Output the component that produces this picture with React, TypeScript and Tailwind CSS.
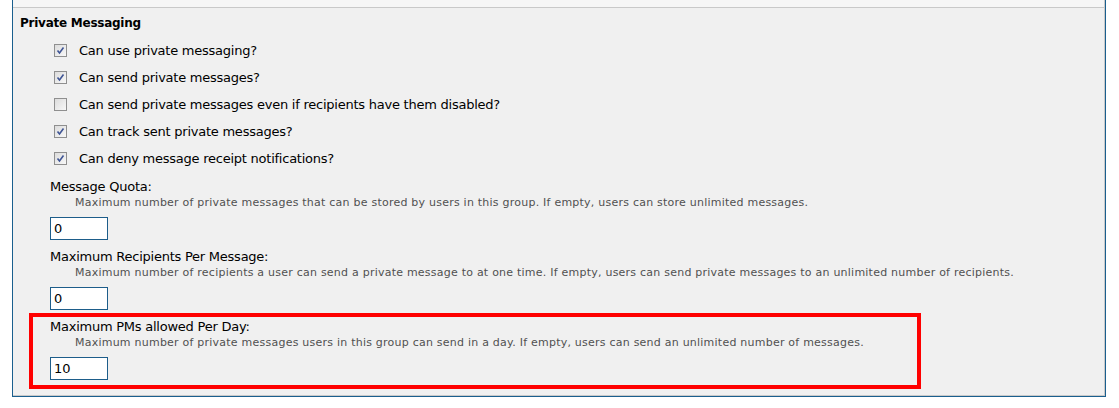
import React from "react";

const font = { fontFamily: '"DejaVu Sans", Verdana, sans-serif' };

function Check({ checked }: { checked: boolean }) {
  return (
    <span className="relative inline-block w-[13px] h-[13px] border border-[#8f8f8f] bg-gradient-to-br from-[#dcdcdc] to-[#f8f8f8]">
      {checked && (
        <svg className="absolute left-[1px] top-[1px]" width="9" height="9" viewBox="0 0 9 9">
          <path d="M1.5 4.5 L3.5 7 L7.5 1.5" stroke="#3f5595" strokeWidth="1.6" fill="none" />
        </svg>
      )}
    </span>
  );
}

const checks: [boolean, string][] = [
  [true, "Can use private messaging?"],
  [true, "Can send private messages?"],
  [false, "Can send private messages even if recipients have them disabled?"],
  [true, "Can track sent private messages?"],
  [true, "Can deny message receipt notifications?"],
];

function Field({ label, desc, value }: { label: string; desc: string; value: string }) {
  return (
    <div className="pl-[37px]">
      <div className="h-[16px] leading-[16px] text-[13px] tracking-[-0.24px] text-black">{label}</div>
      <div className="h-[15px] leading-[15px] text-[11px] tracking-[0.23px] text-[#505050] pl-[25px] whitespace-nowrap">{desc}</div>
      <div className="mt-[7px] w-[58px] h-[23px] border border-[#1d5d8a] bg-white text-[13px] leading-[21px] pl-[3px] text-black">
        {value}
      </div>
    </div>
  );
}

export default function App() {
  return (
    <div className="w-[1119px] h-[408px] bg-white" style={font}>
      <div className="ml-[12px] w-[1094px] border-l border-r border-b border-[#1a5f8e]">
        <div className="border-r border-b border-[#c9c9c9]">
          <div className="h-[7px] bg-[#f6f6f6] border-b border-[#c9c9c9] box-content" />
          <div className="bg-[#f0f0f0] pb-[15px]">
            <div className="h-[29px] pl-[7px] flex items-center font-bold text-[12px] tracking-[-0.25px] text-black">
              Private Messaging
            </div>
            {checks.map(([c, t]) => (
              <div key={t} className="h-[27px] flex items-center pl-[41px]">
                <Check checked={c} />
                <span className="ml-[12px] text-[13px] tracking-[-0.24px] text-black">{t}</span>
              </div>
            ))}
            <div className="pt-[7px] flex flex-col gap-[9px]">
              <Field
                label="Message Quota:"
                desc="Maximum number of private messages that can be stored by users in this group. If empty, users can store unlimited messages."
                value="0"
              />
              <Field
                label="Maximum Recipients Per Message:"
                desc="Maximum number of recipients a user can send a private message to at one time. If empty, users can send private messages to an unlimited number of recipients."
                value="0"
              />
              <div className="relative">
                <span className="absolute left-[16px] top-[-6px] w-[892px] h-[76px] border-4 border-[#ff0000] pointer-events-none" />
                <Field
                  label="Maximum PMs allowed Per Day:"
                  desc="Maximum number of private messages users in this group can send in a day. If empty, users can send an unlimited number of messages."
                  value="10"
                />
              </div>
            </div>
          </div>
        </div>
      </div>
    </div>
  );
}
